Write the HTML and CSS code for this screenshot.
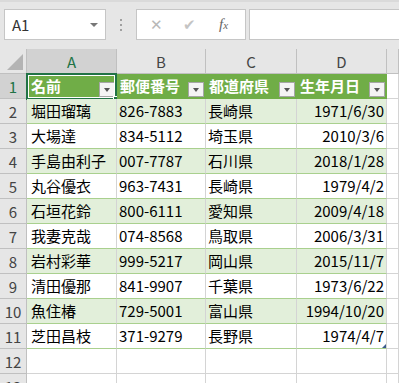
FILE: index.html
```html
<!DOCTYPE html>
<html lang="ja">
<head>
<meta charset="utf-8">
<link rel="stylesheet" href="styles.css">
</head>
<body>
<div class="app">
  <div class="toolbar">
    <div class="namebox"><span class="nb-text">A1</span><span class="nb-arrow"></span></div>
    <div class="grip"><span></span><span></span><span></span></div>
    <div class="fbuttons">
      <span class="fb fb-x">&#x2715;</span>
      <span class="fb fb-ok">&#x2714;</span>
      <span class="fb fb-fx"><i>f</i><i class="x">x</i></span>
    </div>
    <div class="finput"></div>
  </div>
  <div class="sheet">
    <div class="corner"><span class="tri"></span></div>
    <div class="ch sel">A</div>
    <div class="ch">B</div>
    <div class="ch">C</div>
    <div class="ch">D</div>
    <div class="ch last"></div>

    <div class="rh sel">1</div>
    <div class="c th ca">名前<span class="filt"></span><span class="selbox"><span class="handle"></span></span></div>
    <div class="c th">郵便番号<span class="filt"></span></div>
    <div class="c th">都道府県<span class="filt"></span></div>
    <div class="c th">生年月日<span class="filt"></span></div>
    <div class="c e"></div>

    <div class="rh">2</div>
    <div class="c b ca">堀田瑠璃</div><div class="c b">826-7883</div><div class="c b">長崎県</div><div class="c b r">1971/6/30</div><div class="c e"></div>
    <div class="rh">3</div>
    <div class="c w ca">大場達</div><div class="c w">834-5112</div><div class="c w">埼玉県</div><div class="c w r">2010/3/6</div><div class="c e"></div>
    <div class="rh">4</div>
    <div class="c b ca">手島由利子</div><div class="c b">007-7787</div><div class="c b">石川県</div><div class="c b r">2018/1/28</div><div class="c e"></div>
    <div class="rh">5</div>
    <div class="c w ca">丸谷優衣</div><div class="c w">963-7431</div><div class="c w">長崎県</div><div class="c w r">1979/4/2</div><div class="c e"></div>
    <div class="rh">6</div>
    <div class="c b ca">石垣花鈴</div><div class="c b">800-6111</div><div class="c b">愛知県</div><div class="c b r">2009/4/18</div><div class="c e"></div>
    <div class="rh">7</div>
    <div class="c w ca">我妻克哉</div><div class="c w">074-8568</div><div class="c w">鳥取県</div><div class="c w r">2006/3/31</div><div class="c e"></div>
    <div class="rh">8</div>
    <div class="c b ca">岩村彩華</div><div class="c b">999-5217</div><div class="c b">岡山県</div><div class="c b r">2015/11/7</div><div class="c e"></div>
    <div class="rh">9</div>
    <div class="c w ca">清田優那</div><div class="c w">841-9907</div><div class="c w">千葉県</div><div class="c w r">1973/6/22</div><div class="c e"></div>
    <div class="rh">10</div>
    <div class="c b ca">魚住椿</div><div class="c b">729-5001</div><div class="c b">富山県</div><div class="c b r">1994/10/20</div><div class="c e"></div>
    <div class="rh">11</div>
    <div class="c w ca">芝田昌枝</div><div class="c w">371-9279</div><div class="c w">長野県</div><div class="c w r">1974/4/7<span class="resize"></span></div><div class="c e"></div>
    <div class="rh">12</div>
    <div class="c e"></div><div class="c e"></div><div class="c e"></div><div class="c e"></div><div class="c e"></div>
    <div class="rh">13</div>
    <div class="c e"></div><div class="c e"></div><div class="c e"></div><div class="c e"></div><div class="c e"></div>
  </div>
</div>
</body>
</html>
```

FILE: styles.css
```css
* { box-sizing: border-box; }
html, body { margin: 0; padding: 0; }
body {
  width: 399px;
  height: 383px;
  overflow: hidden;
  background: #ffffff;
  font-family: "Noto Sans CJK JP", "Noto Sans", sans-serif;
  font-size: 15px;
  color: #000;
}
.app { display: flex; flex-direction: column; width: 399px; height: 383px; overflow: hidden; }

.toolbar {
  height: 49px;
  flex: none;
  display: flex;
  align-items: flex-start;
  padding-top: 9px;
  padding-left: 4px;
  background: #e6e6e6;
  border-top: 2px solid #dadada;
}
.namebox {
  width: 102px;
  height: 31px;
  margin-top: -2px;
  background: #fff;
  border: 1px solid #c6c6c6;
  display: flex;
  align-items: center;
  padding-left: 7px;
  position: relative;
}
.nb-text { font-size: 15px; color: #333; line-height: 1; }
.nb-arrow {
  position: absolute;
  right: 7px;
  top: 13px;
  width: 0; height: 0;
  border-left: 4px solid transparent;
  border-right: 4px solid transparent;
  border-top: 4px solid #777;
}
.grip {
  width: 30px;
  height: 31px;
  margin-top: -2px;
  display: flex;
  flex-direction: column;
  align-items: center;
  justify-content: center;
  gap: 3px;
}
.grip span { width: 2px; height: 2px; background: #a0a0a0; }
.fbuttons {
  width: 110px;
  height: 31px;
  margin-top: -2px;
  background: #fff;
  border: 1px solid #c6c6c6;
  display: flex;
  align-items: center;
  position: relative;
}
.fb { position: absolute; top: 4px; line-height: 20px; color: #b8b8b8; }
.fb-x { left: 13px; font-size: 15px; }
.fb-ok { left: 46px; font-size: 15px; color: #c4c4c4; }
.fb-fx { left: 82px; font-family: "Liberation Serif", serif; font-size: 15px; color: #666; }
.fb-fx i { font-style: italic; }
.fb-fx .x { font-size: 11px; }
.finput {
  flex: 1;
  height: 31px;
  margin-top: -2px;
  margin-left: 3px;
  margin-right: -2px;
  background: #fff;
  border: 1px solid #c6c6c6;
}

.sheet {
  flex: 1;
  display: grid;
  grid-template-columns: 27px 90px 89px 91px 90px 1fr;
  grid-template-rows: 25px;
  grid-auto-rows: 25px;
  background: #fff;
}
.corner, .ch, .rh {
  background: #e6e6e6;
  border-right: 1px solid #c0c0c0;
  border-bottom: 1px solid #c0c0c0;
  color: #444;
  font-size: 15px;
  display: flex;
  align-items: center;
  justify-content: center;
  line-height: 1;
}
.ch { padding-top: 1px; }
.ch.sel, .rh.sel { background: #d2d2d2; color: #217346; }
.ch.sel { border-bottom: 1px solid #9c9c9c; }
.corner { position: relative; }
.tri {
  position: absolute;
  right: 3px;
  bottom: 3px;
  width: 16px;
  height: 16px;
  background: #b4b4b4;
  clip-path: polygon(100% 0, 100% 100%, 0 100%);
}
.c {
  border-right: 1px solid #d4d4d4;
  border-bottom: 1px solid #d4d4d4;
  padding: 0 2px 0 2px;
  line-height: 24px;
  white-space: nowrap;
  overflow: visible;
  position: relative;
}
.ca { padding-left: 4px; }
.c.b { background: #e2efda; border-bottom-color: #a9d08e; }
.c.w { background: #fff; border-bottom-color: #a9d08e; }
.c.r { text-align: right; padding-right: 2px; }
.th {
  background: #70ad47;
  color: #fff;
  font-weight: bold;
  border-right-color: #70ad47;
  border-bottom-color: #70ad47;
  padding-left: 3px;
}
.th.ca { padding-left: 4px; }
.filt {
  position: absolute;
  right: 1px;
  top: 8px;
  width: 16px;
  height: 15px;
  background: #f4f4f4;
  border: 1px solid #a6a6a6;
}
.filt::after {
  content: "";
  position: absolute;
  left: 4px;
  top: 5px;
  border-left: 3.5px solid transparent;
  border-right: 3.5px solid transparent;
  border-top: 4px solid #555;
}
.selbox {
  position: absolute;
  left: -1px;
  top: -1px;
  right: -1px;
  bottom: -2px;
  border: 2px solid #217346;
  box-shadow: inset 0 0 0 1px #fff;
  pointer-events: none;
}
.handle {
  position: absolute;
  right: -3px;
  bottom: -3px;
  width: 5px;
  height: 5px;
  background: #217346;
  border: 1px solid #fff;
}
.resize {
  position: absolute;
  right: 0;
  bottom: 0;
  width: 4px;
  height: 4px;
  background: #3a5a8c;
  clip-path: polygon(100% 0, 100% 100%, 0 100%);
}
```
